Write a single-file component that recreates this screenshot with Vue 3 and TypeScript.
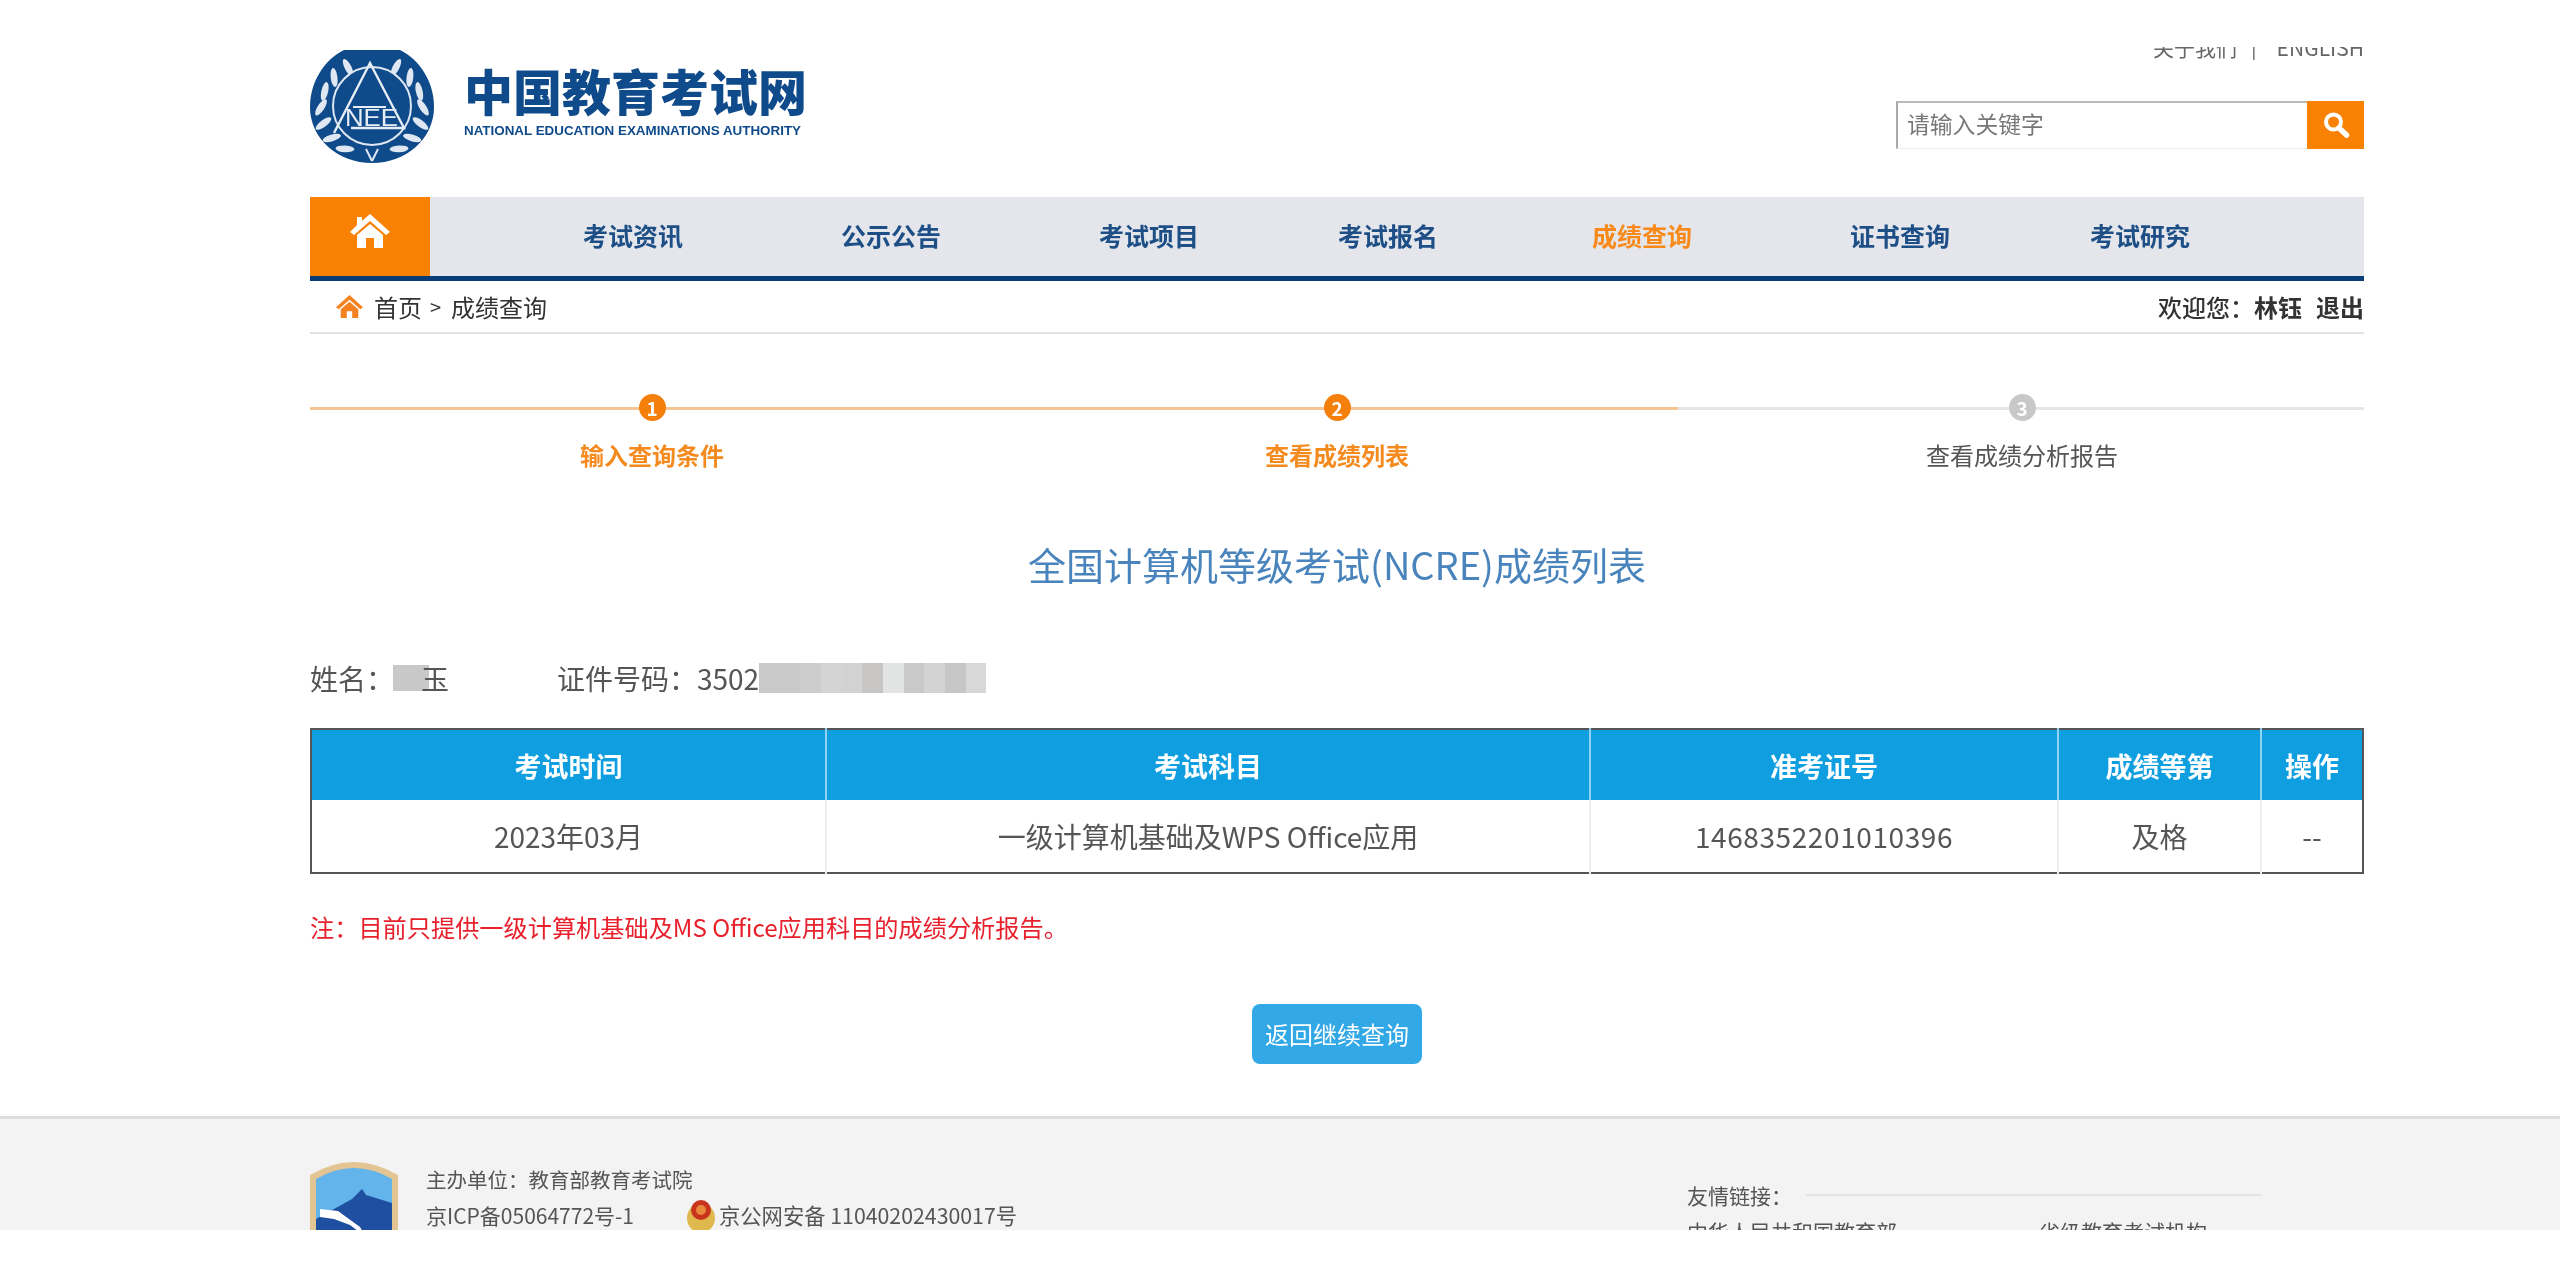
<script setup lang="ts">
// 顶部导航
const navItems = [
  { name: '考试资讯', width: 258 },
  { name: '公示公告', width: 258 },
  { name: '考试项目', width: 258 },
  { name: '考试报名', width: 220 },
  { name: '成绩查询', width: 288, active: true },
  { name: '证书查询', width: 228 },
  { name: '考试研究', width: 252 },
]

const steps = [
  { no: 1, label: '输入查询条件', done: true },
  { no: 2, label: '查看成绩列表', done: true },
  { no: 3, label: '查看成绩分析报告', done: false },
]

// 证件号打码块的灰度
const mosaic = ['#c9c9c9', '#c9c9c9', '#cdcdcd', '#d4d4d4', '#d2d2d2', '#c8c6c4', '#e2e3e3', '#c9c9c9', '#d3d3d3', '#c6c6c6', '#d8d8d8']

// 徽标麦穗
const leaves: { x: number; y: number; r: number }[] = []
for (let i = 0; i < 7; i++) {
  const deg = 28 + i * 20
  const a = deg * (Math.PI / 180)
  const x = Math.sin(a) * 51
  const y = Math.cos(a) * 47
  leaves.push({ x: 62 - x, y: 60 - y, r: deg + 35 })
  leaves.push({ x: 62 + x, y: 60 - y, r: -deg - 35 })
}
</script>

<template>
  <div class="page">
    <div class="wrap">
      <header class="head">
        <div class="brand">
          <svg class="emblem" viewBox="0 0 124 114" width="124" height="114">
            <path d="M34 1H90C110 11 124 33 124 58C124 90 96 114 62 114C28 114 0 90 0 58C0 33 14 11 34 1Z" fill="#0f4a8a" />
            <ellipse v-for="(l, i) in leaves" :key="i" :cx="l.x" :cy="l.y" rx="9.5" ry="3.4" fill="#dfe8f2" :transform="`rotate(${l.r} ${l.x} ${l.y})`" />
            <circle cx="62" cy="57" r="39" fill="#0f4a8a" stroke="#dfe8f2" stroke-width="2" />
            <path d="M62 112L56 100M62 112L68 100" stroke="#dfe8f2" stroke-width="2" />
            <path d="M24 84L60 14L94 79H41" fill="none" stroke="#e6edf5" stroke-width="2.4" />
            <path d="M43 58H76" stroke="#e6edf5" stroke-width="2" />
            <text x="35" y="77" class="nee" textLength="53" lengthAdjust="spacingAndGlyphs">NEE</text>
          </svg>
          <div class="brand-text">
            <div class="brand-cn">中国教育考试网</div>
            <div class="brand-en">NATIONAL EDUCATION EXAMINATIONS AUTHORITY</div>
          </div>
        </div>
        <div class="head-right">
          <div class="top-links"><span>关于我们</span><i>|</i><span>ENGLISH</span></div>
          <div class="search">
            <div class="search-input">请输入关键字</div>
            <div class="search-btn">
              <svg viewBox="0 0 28 28" width="28" height="28">
                <circle cx="11.5" cy="11" r="7.5" fill="none" stroke="#fff" stroke-width="4" />
                <path d="M17 17L24.5 24" stroke="#fff" stroke-width="5.5" stroke-linecap="round" />
              </svg>
            </div>
          </div>
        </div>
      </header>

      <nav class="nav">
        <div class="nav-home">
          <svg viewBox="0 0 40 34" width="40" height="34">
            <path d="M20 0L40 18L36 21L20 7L4 21L0 18L7 11V3H12V7Z M20 10L33 21V34H24V24H16V34H7V21Z" fill="#fff" />
          </svg>
        </div>
        <div class="nav-list">
          <a v-for="item in navItems" :key="item.name" :class="['nav-item', { active: item.active }]" :style="{ width: item.width + 'px' }">{{ item.name }}</a>
        </div>
      </nav>

      <div class="crumb">
        <div class="crumb-left">
          <svg viewBox="0 0 40 34" width="27" height="23">
            <path d="M20 0L40 18L36 21L20 7L4 21L0 18Z M20 10L33 21V34H24V24H16V34H7V21Z" fill="#f58220" />
          </svg>
          <span class="crumb-home">首页</span>
          <span class="crumb-sep">&gt;</span>
          <span>成绩查询</span>
        </div>
        <div class="crumb-right">欢迎您：<b>林钰</b><b class="logout">退出</b></div>
      </div>

      <div class="steps">
        <div class="step-line"><div class="step-line-done"></div></div>
        <div v-for="s in steps" :key="s.no" :class="['step', { done: s.done }]">
          <span class="step-no">{{ s.no }}</span>
          <span class="step-label">{{ s.label }}</span>
        </div>
      </div>

      <h1 class="title">全国计算机等级考试(NCRE)成绩列表</h1>

      <div class="person">
        <span class="person-name">姓名：<i class="mask-name"></i>玉</span>
        <span class="person-id">证件号码：3502<span class="mosaic"><i v-for="(c, i) in mosaic" :key="i" :style="{ background: c }"></i></span></span>
      </div>

      <table class="score">
        <colgroup>
          <col style="width: 515px" />
          <col style="width: 764px" />
          <col style="width: 468px" />
          <col style="width: 203px" />
          <col />
        </colgroup>
        <thead>
          <tr>
            <th>考试时间</th>
            <th>考试科目</th>
            <th>准考证号</th>
            <th>成绩等第</th>
            <th>操作</th>
          </tr>
        </thead>
        <tbody>
          <tr>
            <td>2023年03月</td>
            <td>一级计算机基础及WPS Office应用</td>
            <td class="ticket">1468352201010396</td>
            <td>及格</td>
            <td>--</td>
          </tr>
        </tbody>
      </table>

      <p class="note">注：目前只提供一级计算机基础及MS Office应用科目的成绩分析报告。</p>

      <div class="back-row"><a class="back-btn">返回继续查询</a></div>
    </div>

    <footer class="foot">
      <div class="foot-inner">
        <svg class="foot-logo" viewBox="0 0 88 116" width="88" height="116">
          <path d="M0 14Q44 -12 88 14V116H0Z" fill="#e3c594" />
          <path d="M6 18Q44 -4 82 18V116H6Z" fill="#62b4ea" />
          <path d="M6 58L42 38L52 28L56 34L82 42V78H6Z" fill="#1f4fa0" />
          <path d="M10 48L28 50L50 66L56 76L40 64L24 58L10 56Z" fill="#fff" />
          <rect x="6" y="78" width="76" height="38" fill="#3f9fe0" />
        </svg>
        <div class="foot-info">
          <div class="foot-host">主办单位：教育部教育考试院</div>
          <div class="foot-icp">
            <span>京ICP备05064772号-1</span>
            <span class="foot-police">
              <svg viewBox="0 0 30 36" width="30" height="36">
                <ellipse cx="15" cy="21" rx="14" ry="15" fill="#e0b94e" />
                <circle cx="15" cy="13" r="10" fill="#c9341f" />
                <circle cx="15" cy="13" r="5" fill="#e88a3a" />
              </svg>
              <span class="foot-police-text">京公网安备 11040202430017号</span>
            </span>
          </div>
        </div>
        <div class="foot-links">
          <div class="foot-links-head"><span>友情链接：</span><i></i></div>
          <div class="foot-links-row"><span>中华人民共和国教育部</span><span>省级教育考试机构</span></div>
        </div>
      </div>
    </footer>
  </div>
</template>

<style>
html,
body {
  margin: 0;
  background: #fff;
}
</style>

<style scoped>
.page {
  width: 2560px;
  height: 1280px;
  overflow: hidden;
  background: #fff;
  font-family: "Noto Sans CJK SC", "Noto Sans", sans-serif;
  color: #333;
  filter: blur(0.6px);
}

.wrap {
  width: 2054px;
  margin-left: 310px;
}

.head {
  height: 197px;
  display: flex;
  justify-content: space-between;
}

.brand {
  display: flex;
  padding-top: 49px;
}

.emblem {
  flex: none;
}

.nee {
  font-family: "Liberation Sans", sans-serif;
  font-size: 24px;
  fill: #e6edf5;
}

.brand-text {
  margin-left: 30px;
  padding-top: 11px;
}

.brand-cn {
  font-size: 49px;
  line-height: 60px;
  font-weight: 900;
  color: #0f4a8a;
}

.brand-en {
  margin-top: 3px;
  font-family: "Liberation Sans", sans-serif;
  font-size: 13.4px;
  line-height: 16px;
  font-weight: 700;
  color: #0f4a8a;
  white-space: nowrap;
}

.head-right {
  width: 468px;
  display: flex;
  flex-direction: column;
  align-items: flex-end;
}

.top-links {
  margin-top: 47px;
  height: 13px;
  display: flex;
  align-items: flex-end;
  overflow: hidden;
  font-size: 21px;
  line-height: 26px;
  color: #666;
}

.top-links i {
  font-style: normal;
  margin: 0 20px 0 14px;
}

.search {
  margin-top: 41px;
  width: 468px;
  height: 48px;
  display: flex;
}

.search-input {
  flex: 1;
  box-sizing: border-box;
  border-top: 2px solid #bbb;
  border-left: 2px solid #aaa;
  border-bottom: 1px solid #eee;
  padding-left: 9px;
  font-size: 22.8px;
  line-height: 42px;
  color: #777;
}

.search-btn {
  width: 57px;
  background: #f98205;
  display: flex;
  align-items: center;
  justify-content: center;
}

.nav {
  height: 84px;
  box-sizing: border-box;
  display: flex;
  background: #e4e6eb;
  border-bottom: 5px solid #0a3d78;
}

.nav-home {
  width: 120px;
  background: #f98205;
  display: flex;
  justify-content: center;
  padding-top: 17px;
  box-sizing: border-box;
}

.nav-list {
  display: flex;
  padding-left: 74px;
}

.nav-item {
  text-align: center;
  font-size: 25px;
  line-height: 76px;
  font-weight: 700;
  color: #1d4f86;
}

.nav-item.active {
  color: #f98a1a;
}

.crumb {
  height: 53px;
  box-sizing: border-box;
  border-bottom: 2px solid #e2e2e2;
  display: flex;
  justify-content: space-between;
  align-items: center;
  font-size: 24px;
  color: #333;
}

.crumb-left {
  display: flex;
  align-items: center;
  padding-left: 26px;
}

.crumb-home {
  margin-left: 11px;
}

.crumb-sep {
  margin: 0 10px 0 8px;
  font-size: 20px;
}

.crumb-right {
  width: 206px;
  white-space: nowrap;
  overflow: hidden;
  font-weight: 500;
}

.crumb-right b {
  font-weight: 700;
}

.logout {
  margin-left: 14px;
}

.steps {
  position: relative;
  margin-top: 60px;
  display: flex;
  justify-content: space-between;
  height: 90px;
}

.step-line {
  position: absolute;
  left: 0;
  right: 0;
  top: 13px;
  height: 3px;
  background: #e6e6e6;
}

.step-line-done {
  width: 1368px;
  height: 3px;
  background: #f4c492;
}

.step {
  position: relative;
  width: 684px;
  display: flex;
  flex-direction: column;
  align-items: center;
  font-size: 24px;
  color: #555;
}

.step.done {
  color: #f58a1f;
  font-weight: 700;
}

.step-no {
  width: 27px;
  height: 27px;
  border-radius: 50%;
  background: #c8c8c8;
  color: #fff;
  font-size: 19px;
  font-weight: 700;
  line-height: 27px;
  text-align: center;
}

.step.done .step-no {
  background: #f47f0a;
}

.step-label {
  margin-top: 17px;
  line-height: 34px;
}

.title {
  margin: 54px 0 0;
  text-align: center;
  font-size: 38px;
  line-height: 52px;
  font-weight: 400;
  color: #4a84bd;
}

.person {
  margin-top: 66px;
  height: 44px;
  display: flex;
  align-items: center;
  font-size: 28px;
  color: #555;
}

.person-name {
  width: 247px;
  display: flex;
  align-items: center;
}

.mask-name {
  width: 36px;
  height: 26px;
  margin-left: -1px;
  margin-right: -8px;
  background: #c8c8c8;
}

.person-id {
  display: flex;
  align-items: center;
}

.mosaic {
  display: flex;
  width: 227px;
  height: 30px;
}

.mosaic i {
  flex: 1;
}

.score {
  margin-top: 28px;
  width: 2054px;
  height: 146px;
  table-layout: fixed;
  border-collapse: collapse;
  border: 2px solid #555;
  font-size: 28px;
}

.score th {
  height: 70px;
  padding: 0;
  background: #0f9fe0;
  color: #fff;
  font-weight: 700;
  font-size: 27px;
  border-left: 2px solid #8fd3f2;
}

.score td {
  padding: 0;
  height: 72px;
  text-align: center;
  color: #555;
  border-left: 2px solid #eee;
}

.score .ticket {
  letter-spacing: 0.6px;
}

.score th:first-child,
.score td:first-child {
  border-left: 0;
}

.note {
  margin: 36px 0 0;
  font-size: 24.2px;
  line-height: 34px;
  color: #e8202c;
}

.back-row {
  margin-top: 60px;
  display: flex;
  justify-content: center;
}

.back-btn {
  width: 170px;
  height: 60px;
  border-radius: 8px;
  background: #33a8e6;
  color: #fff;
  font-size: 24px;
  line-height: 60px;
  text-align: center;
}

.foot {
  margin-top: 52px;
  height: 114px;
  box-sizing: border-box;
  overflow: hidden;
  background: #f3f3f3;
  border-top: 3px solid #ddd;
}

.foot-inner {
  margin-left: 310px;
  width: 1952px;
  display: flex;
  padding-top: 42px;
  font-size: 21px;
  color: #555;
}

.foot-logo {
  flex: none;
}

.foot-info {
  margin-left: 28px;
  width: 1261px;
  line-height: 36px;
}

.foot-host {
  font-size: 20.5px;
}

.foot-icp {
  display: flex;
  align-items: center;
}

.foot-icp > span:first-child {
  width: 260px;
}

.foot-police {
  display: flex;
  align-items: center;
  white-space: nowrap;
}

.foot-police-text {
  margin-left: 3px;
  font-size: 21.3px;
}

.foot-links {
  width: 574px;
  padding-top: 16px;
  line-height: 36px;
}

.foot-links-head {
  display: flex;
  align-items: center;
}

.foot-links-head i {
  flex: 1;
  margin-left: 14px;
  height: 2px;
  background: #e4e4e4;
}

.foot-links-row {
  display: flex;
  gap: 142px;
  white-space: nowrap;
}
</style>
